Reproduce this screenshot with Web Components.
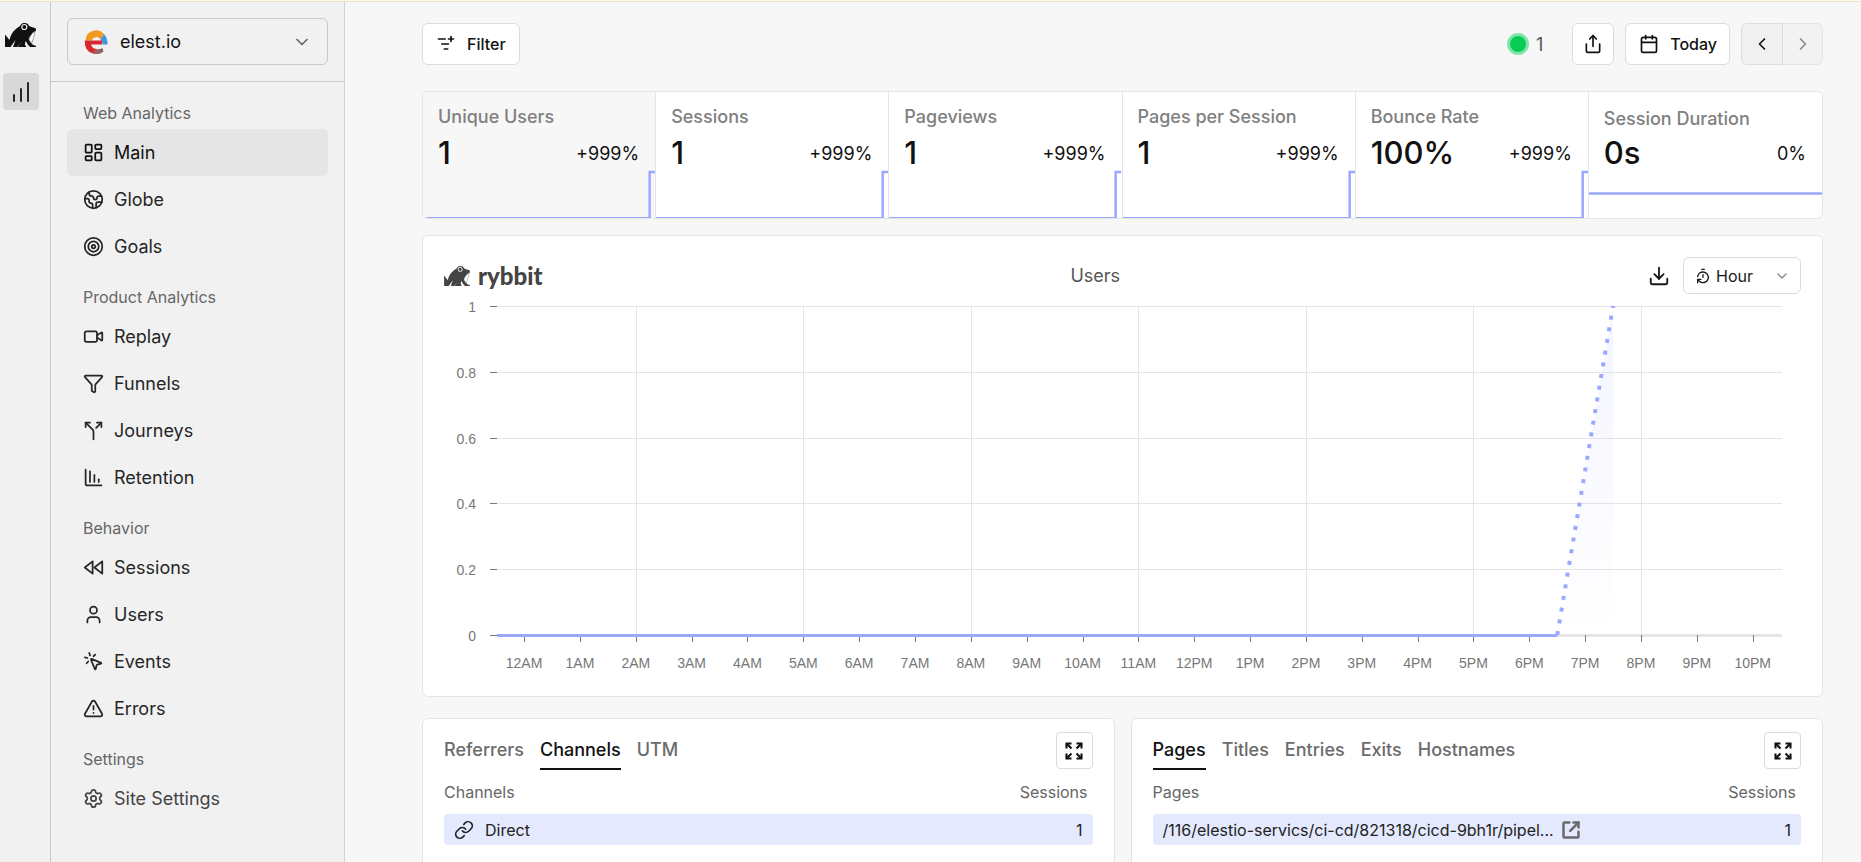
<!DOCTYPE html>
<html lang="en">
<head>
<meta charset="utf-8">
<title>Rybbit · Main</title>
<style>
html,body{margin:0;height:100%}
body{font-family:Inter,sans-serif;color:#171717;background:#f7f7f7}
</style>
</head>
<body>
<app-shell>
  <icon-rail slot="rail"></icon-rail>
  <side-nav slot="nav">
    <nav-group label="Web Analytics">
      <nav-item icon="dashboard" active>Main</nav-item>
      <nav-item icon="earth">Globe</nav-item>
      <nav-item icon="target">Goals</nav-item>
    </nav-group>
    <nav-group label="Product Analytics">
      <nav-item icon="video">Replay</nav-item>
      <nav-item icon="funnel">Funnels</nav-item>
      <nav-item icon="split">Journeys</nav-item>
      <nav-item icon="decreasing">Retention</nav-item>
    </nav-group>
    <nav-group label="Behavior">
      <nav-item icon="rewind">Sessions</nav-item>
      <nav-item icon="user">Users</nav-item>
      <nav-item icon="click">Events</nav-item>
      <nav-item icon="alert">Errors</nav-item>
    </nav-group>
    <nav-group label="Settings">
      <nav-item icon="settings" muted>Site Settings</nav-item>
    </nav-group>
  </side-nav>
  <top-bar></top-bar>
  <stat-strip>
    <stat-card label="Unique Users" value="1" change="+999%" selected></stat-card>
    <stat-card label="Sessions" value="1" change="+999%"></stat-card>
    <stat-card label="Pageviews" value="1" change="+999%"></stat-card>
    <stat-card label="Pages per Session" value="1" change="+999%"></stat-card>
    <stat-card label="Bounce Rate" value="100%" change="+999%"></stat-card>
    <stat-card label="Session Duration" value="0s" change="0%" flat></stat-card>
  </stat-strip>
  <chart-panel><line-chart></line-chart></chart-panel>
  <panel-grid>
    <data-panel tabs="Referrers,Channels,UTM" current="Channels" column="Channels" icon="link" value="1" row="Direct"></data-panel>
    <data-panel tabs="Pages,Titles,Entries,Exits,Hostnames" current="Pages" column="Pages" href="#page" value="1" row="/116/elestio-servics/ci-cd/821318/cicd-9bh1r/pipel..."></data-panel>
  </panel-grid>
</app-shell>

<script>
const ICONS = {
  dashboard:'<rect x="3" y="3" width="7" height="9" rx="1"/><rect x="14" y="3" width="7" height="5" rx="1"/><rect x="14" y="12" width="7" height="9" rx="1"/><rect x="3" y="16" width="7" height="5" rx="1"/>',
  earth:'<path d="M21.54 15H17a2 2 0 0 0-2 2v4.54"/><path d="M7 3.34V5a3 3 0 0 0 3 3a2 2 0 0 1 2 2c0 1.1.9 2 2 2a2 2 0 0 0 2-2c0-1.1.9-2 2-2h3.17"/><path d="M11 21.95V18a2 2 0 0 0-2-2a2 2 0 0 1-2-2v-1a2 2 0 0 0-2-2H2.05"/><circle cx="12" cy="12" r="10"/>',
  target:'<circle cx="12" cy="12" r="10"/><circle cx="12" cy="12" r="6"/><circle cx="12" cy="12" r="2"/>',
  video:'<path d="m16 13 5.223 3.482a.5.5 0 0 0 .777-.416V7.87a.5.5 0 0 0-.752-.432L16 10.5"/><rect x="2" y="6" width="14" height="12" rx="2"/>',
  funnel:'<path d="M10 20a1 1 0 0 0 .553.895l2 1A1 1 0 0 0 14 21v-7a2 2 0 0 1 .517-1.341L21.74 4.67A1 1 0 0 0 21 3H3a1 1 0 0 0-.742 1.67l7.225 7.989A2 2 0 0 1 10 14z"/>',
  split:'<path d="M16 3h5v5"/><path d="M8 3H3v5"/><path d="M12 22v-8.3a4 4 0 0 0-1.172-2.872L3 3"/><path d="m15 9 6-6"/>',
  decreasing:'<path d="M13 17V9"/><path d="M18 17v-3"/><path d="M3 3v16a2 2 0 0 0 2 2h16"/><path d="M8 17V5"/>',
  rewind:'<path d="M11 19 2 12l9-7z"/><path d="m22 19-9-7 9-7z"/>',
  user:'<path d="M19 21v-2a4 4 0 0 0-4-4H9a4 4 0 0 0-4 4v2"/><circle cx="12" cy="7" r="4"/>',
  click:'<path d="M14 4.1 12 6"/><path d="m5.1 8-2.9-.8"/><path d="m6 12-1.9 2"/><path d="M7.2 2.2 8 5.1"/><path d="M9.037 9.69a.498.498 0 0 1 .653-.653l11 4.5a.5.5 0 0 1-.074.949l-4.349 1.041a1 1 0 0 0-.74.739l-1.04 4.35a.5.5 0 0 1-.95.074z"/>',
  alert:'<path d="m21.73 18-8-14a2 2 0 0 0-3.48 0l-8 14A2 2 0 0 0 4 21h16a2 2 0 0 0 1.73-3"/><path d="M12 9v4"/><path d="M12 17h.01"/>',
  settings:'<path d="M9.671 4.136a2.34 2.34 0 0 1 4.659 0 2.34 2.34 0 0 0 3.319 1.915 2.34 2.34 0 0 1 2.33 4.033 2.34 2.34 0 0 0 0 3.831 2.34 2.34 0 0 1-2.33 4.033 2.34 2.34 0 0 0-3.319 1.915 2.34 2.34 0 0 1-4.659 0 2.34 2.34 0 0 0-3.32-1.915 2.34 2.34 0 0 1-2.33-4.033 2.34 2.34 0 0 0 0-3.831A2.34 2.34 0 0 1 6.35 6.051a2.34 2.34 0 0 0 3.319-1.915"/><circle cx="12" cy="12" r="3"/>',
  filter:'<path d="M10 18h4"/><path d="M11 6H3"/><path d="M15 6h6"/><path d="M18 9V3"/><path d="M7 12h8"/>',
  share:'<path d="M12 2v13"/><path d="m16 6-4-4-4 4"/><path d="M4 12v8a2 2 0 0 0 2 2h12a2 2 0 0 0 2-2v-8"/>',
  calendar:'<path d="M8 2v4"/><path d="M16 2v4"/><rect width="18" height="18" x="3" y="4" rx="2"/><path d="M3 10h18"/>',
  download:'<path d="M12 15V3"/><path d="M21 15v4a2 2 0 0 1-2 2H5a2 2 0 0 1-2-2v-4"/><path d="m7 10 5 5 5-5"/>',
  timer:'<path d="M10 2h4"/><path d="M12 14v-4"/><path d="M4 13a8 8 0 0 1 8-7 8 8 0 1 1-5.3 14L4 17.6"/><path d="M9 17H4v5"/>',
  expand:'<g stroke-linecap="butt" stroke-linejoin="miter"><path d="M9 9 3 3"/><path d="m15 9 6-6"/><path d="m9 15-6 6"/><path d="m15 15 6 6"/><path d="M3 9V3h6"/><path d="M15 3h6v6"/><path d="M3 15v6h6"/><path d="M15 21h6v-6"/></g>',
  link:'<path d="M10 13a5 5 0 0 0 7.54.54l3-3a5 5 0 0 0-7.07-7.07l-1.72 1.71"/><path d="M14 11a5 5 0 0 0-7.54-.54l-3 3a5 5 0 0 0 7.07 7.07l1.71-1.71"/>',
  external:'<path d="M10 3H4a1 1 0 0 0-1 1v16a1 1 0 0 0 1 1h16a1 1 0 0 0 1-1v-6"/><path d="M21 3 11 13"/><path d="M15 3h6v6"/>',
  bars:'<path d="M5 21v-6"/><path d="M12 21V9"/><path d="M19 21V3"/>',
  down:'<path d="m6 9 6 6 6-6"/>', left:'<path d="m15 18-6-6 6-6"/>', right:'<path d="m9 18 6-6-6-6"/>'
};
const FROG = '<svg viewBox="0 0 31 24" aria-hidden="true"><path fill="currentColor" d="M0 24V11.500L4.500 17C6 10 10 6 15 3C16 0.500 18 0 20 0C22 0 23.500 1 24 3L31 5.500L30.800 8C28 9 25 12 23.600 16C24.500 19 27 22 31 23V24H25C22.500 21.500 21.500 19.500 21 18C19.500 20 19.500 22 21.500 24H12.500L16.500 19L12 24H8L10.500 17L5.500 24Z"/><path d="M29.800 8.200C29.500 13 28 17 26.500 20.500L24 16.500C25.500 12.500 27.500 9.500 29.800 8.200Z" fill="#fff" stroke="currentColor" stroke-width=".4"/><circle cx="19.300" cy="4" r="2.500" fill="none" stroke="#f1f1f1" stroke-width="1.200"/></svg>';

class Base extends HTMLElement {
  constructor() { super(); this.attachShadow({ mode: 'open' }); }
  connectedCallback() {
    this.shadowRoot.innerHTML = '<style>:host,*{box-sizing:border-box}button,select{font:inherit;color:inherit}' + this.css() + '</style>' + this.html();
  }
  attr(name) { return this.getAttribute(name) || ''; }
}
const define = (name, css, html) => customElements.define(name, class extends Base {
  css() { return css; }
  html() { return html(this); }
});

define('ui-icon',
  ':host{display:inline-flex;flex:none;width:20px;height:20px}svg{width:100%;height:100%;fill:none;stroke:currentColor;stroke-width:var(--stroke,2);stroke-linecap:round;stroke-linejoin:round}',
  e => `<svg viewBox="0 0 24 24" aria-hidden="true">${ICONS[e.attr('name')] || ''}</svg>`);

define('frog-mark', ':host{display:block;flex:none}svg{display:block;width:100%;height:100%}', () => FROG);

define('app-shell', `
  :host{display:flex;flex-direction:column;height:100vh}
  .strip{height:2px;flex:none;background:#fdfae8;border-bottom:1px solid #e6e1cf}
  .body{display:flex;flex:1;min-height:0}
  main{flex:1;min-width:0;padding:21px 38px 0 77px;display:flex;flex-direction:column;overflow-y:auto;scrollbar-width:none}
`, () => `<div class="strip"></div><div class="body"><slot name="rail"></slot><slot name="nav"></slot><main><slot></slot></main></div>`);

define('icon-rail', `
  :host{display:flex;flex-direction:column;align-items:flex-start;flex:none;width:51px;background:#f1f1f1;border-right:1px solid #c8c8c8}
  a{color:#111;display:flex}
  .home{padding:21px 0 0 5px}
  frog-mark{width:31px;height:24px}
  .sites{margin:26px 0 0 3px;width:36px;height:37px;border-radius:4px;background:#d9d9d9;color:#262626;align-items:center;justify-content:center}
  ui-icon{width:24px;height:24px}
`, () => `<a class="home" href="#home" aria-label="Rybbit"><frog-mark></frog-mark></a><a class="sites" href="#sites" aria-label="Sites"><ui-icon name="bars"></ui-icon></a>`);

define('side-nav', `
  :host{display:block;flex:none;width:294px;background:#f1f1f1;border-right:1px solid #d4d4d4}
  .site{padding:16px;border-bottom:1px solid #c8c8c8}
  .box{display:grid;align-items:center}
  .box>*{grid-area:1/1}
  select{appearance:none;width:100%;height:47px;padding:0 44px 0 52px;background:none;border:1px solid #c8c8c8;border-radius:6px;font-size:18px;color:#111}
  svg{width:24px;height:24px;margin-left:17px;pointer-events:none}
  ui-icon{justify-self:end;margin-right:16px;color:#666;pointer-events:none}
  nav{display:flex;flex-direction:column;gap:15px;padding:19px 16px 0}
`, () => `<div class="site"><div class="box"><select aria-label="Site"><option>elest.io</option></select>
  <svg viewBox="0 0 24 24" fill="none" aria-hidden="true"><path d="M1.500 10.500A10.500 10.500 0 0 1 20 4L16.500 9.500A5 5 0 0 0 7.500 10.500Z" fill="#f09a22"/><path d="M20 4Q24 9 23.500 14.500H18.500Q18.500 11.500 16.500 9.500Z" fill="#3f97dc"/><path d="M0.800 10.500H18V14.500H7Q8.500 19 13 19L9 23.500Q0 21 0.800 10.500Z" fill="#d8282f"/><path d="M13 19Q16 19.500 18.500 18L19.500 21.500Q14.500 25.500 8.500 23.500Z" fill="#95646b"/></svg>
  <ui-icon name="down"></ui-icon></div></div><nav aria-label="Analytics"><slot></slot></nav>`);

define('nav-group', `
  :host{display:block}
  h2{margin:0 0 4px;padding-left:16px;font-size:16px;line-height:24px;font-weight:400;color:#666}
`, e => `<h2>${e.attr('label')}</h2><slot></slot>`);

define('nav-item', `
  :host{display:block;color:#262626}
  :host([muted]){color:#444}
  a{display:flex;align-items:center;gap:10px;height:47px;padding:0 16px;border-radius:6px;color:inherit;text-decoration:none;font-size:18px}
  :host([active]) a{background:#e5e5e5;color:#111}
  ui-icon{width:21px;height:21px}
`, e => `<a href="#${e.attr('icon')}"><ui-icon name="${e.attr('icon')}"></ui-icon><span><slot></slot></span></a>`);

define('top-bar', `
  :host{display:flex;align-items:center;gap:11px;flex:none;font-size:16px}
  button{height:42px;display:flex;align-items:center;justify-content:center;background:#fff;border:1px solid #dcdcdc;border-radius:6px;padding:0;font-weight:500;color:#111}
  .filter{padding:0 13px;gap:11px;margin-right:auto}
  .square{width:42px}
  .date{padding:0 12px 0 13px;gap:11px}
  .live{display:flex;align-items:center;gap:7px;font-size:18px;color:#555;margin-right:18px}
  .dot{width:22px;height:22px;border-radius:50%;background:#0acc55;border:3px solid #80e5ac}
  .pair{display:flex}
  .prev{width:42px;background:#f0f0f0;border-radius:6px 0 0 6px}
  .next{width:40px;background:#f2f2f2;border-left:0;border-radius:0 6px 6px 0;color:#888;border-color:#e5e5e5}
`, () => `<button class="filter"><ui-icon name="filter"></ui-icon>Filter</button>
  <span class="live"><span class="dot"></span>1</span>
  <button class="square" aria-label="Share"><ui-icon name="share"></ui-icon></button>
  <button class="date"><ui-icon name="calendar"></ui-icon>Today</button>
  <span class="pair"><button class="prev" aria-label="Previous"><ui-icon name="left"></ui-icon></button><button class="next" aria-label="Next" disabled><ui-icon name="right"></ui-icon></button></span>`);

define('stat-strip', `
  :host{display:grid;grid-template-columns:repeat(6,1fr);flex:none;margin-top:26px;background:#fff;border:1px solid #e5e5e5;border-radius:6px;overflow:hidden}
`, () => `<slot></slot>`);

define('stat-card', `
  :host{display:flex;flex-direction:column;height:126px;border-right:1px solid #e5e5e5}
  :host([selected]){background:#f7f7f7}
  :host(:last-child){border-right:0}
  .label{padding:13px 15px 0;font-size:18px;line-height:24px;font-weight:500;color:#808080}
  :host([flat]) .label{padding-top:15px;margin-bottom:-2px}
  .row{display:flex;align-items:center;justify-content:space-between;padding:0 16px 0 15px;height:48px;font-size:18px;color:#111}
  .value{font-size:31px;line-height:48px;font-weight:500}
  svg{display:block;flex:none;margin-top:-7px;width:100%;height:48px;fill:none;stroke:#9aa8ff}
`, e => `<div class="label">${e.attr('label')}</div><div class="row"><span class="value">${e.attr('value')}</span><span>${e.attr('change')}</span></div>
  <svg viewBox="0 0 232 48" preserveAspectRatio="none" aria-hidden="true">${e.hasAttribute('flat')
    ? '<path d="M0 23.500H232" stroke-width="2.500"/>'
    : '<path d="M0 47.500H226" stroke-width="1"/><path d="M226.500 48V2H232" stroke-width="2.500"/>'}</svg>`);

define('chart-panel', `
  :host{display:flex;flex-direction:column;flex:none;margin-top:16px;padding:21px 21px 0;background:#fff;border:1px solid #e5e5e5;border-radius:6px;height:462px}
  header{display:flex;align-items:center;justify-content:space-between;height:37px}
  .brand{display:flex;align-items:center;gap:8px;color:#444;text-decoration:none;font:900 24px/28px Lato,sans-serif}
  frog-mark{width:26px;height:20px}
  .title{font-size:18px;line-height:24px;color:#555}
  .tools{display:flex;align-items:center;gap:13px}
  .get{border:0;background:none;padding:0;display:flex}
  .get ui-icon{width:22px;height:22px}
  .pick{display:grid;align-items:center;width:118px}
  .pick>*{grid-area:1/1}
  select{appearance:none;width:100%;height:37px;padding:0 32px 0 32px;font-size:16px;border:1px solid #dcdcdc;border-radius:6px;background:#fff}
  .pick ui-icon{pointer-events:none;width:16px;height:16px}
  .clock{margin-left:12px}
  .arrow{justify-self:end;margin-right:11px;color:#888}
`, () => `<header><a class="brand" href="#rybbit"><frog-mark></frog-mark>rybbit</a><span class="title">Users</span>
  <span class="tools"><button class="get" aria-label="Download"><ui-icon name="download"></ui-icon></button>
  <span class="pick"><select aria-label="Bucket size"><option>Hour</option></select><ui-icon class="clock" name="timer"></ui-icon><ui-icon class="arrow" name="down"></ui-icon></span></span></header><slot></slot>`);

customElements.define('line-chart', class extends Base {
  css() { return ':host{display:block;height:380px}svg{display:block;width:100%;height:380px;font:14px "Liberation Sans",Arial,sans-serif}'; }
  html() { return '<svg role="img" aria-label="Users per hour"></svg>'; }
  connectedCallback() {
    super.connectedCallback();
    this.draw();
    new ResizeObserver(() => this.draw()).observe(this);
  }
  draw() {
    const left = 53, right = this.clientWidth - 19, top = 12, bottom = 341;
    if (right <= left) return;
    const step = (right - left) / 23.01, x = i => left + step * (i + 0.485);
    let s = '<defs><linearGradient id="fill" x1="0" y1="0" x2="0" y2="1"><stop offset="0" stop-color="#9aa8ff" stop-opacity=".12"/><stop offset="1" stop-color="#9aa8ff" stop-opacity="0"/></linearGradient></defs>';
    for (let i = 0; i <= 5; i++) {
      const y = Math.round(bottom - (bottom - top) * i / 5) + 0.5;
      const label = i === 0 ? '0' : i === 5 ? '1' : (i / 5).toFixed(1);
      s += `<path d="M${left} ${y}H${right}" stroke="#e5e5e5" stroke-width="${i ? 1 : 3}"/><path d="M${left - 7} ${y}h7" stroke="#777"/><text x="${left - 21}" y="${y + 5}" text-anchor="end" fill="#777">${label}</text>`;
    }
    for (let i = 2; i < 23; i += 3) s += `<path d="M${Math.round(x(i)) + 0.5} ${top}V${bottom}" stroke="#e5e5e5"/>`;
    for (let i = 0; i < 23; i++) {
      const h = i % 12 || 12;
      s += `<path d="M${Math.round(x(i)) + 0.5} ${bottom}v7" stroke="#777"/><text x="${x(i)}" y="${bottom + 33}" text-anchor="middle" fill="#777">${h}${i < 12 ? 'AM' : 'PM'}</text>`;
    }
    const a = x(18.5), b = x(19.5);
    s += `<path d="M${a} ${bottom}L${b} ${top}V${bottom}Z" fill="url(#fill)"/>
      <path d="M${left} ${bottom + 0.5}H${a}" stroke="#9aa8ff" stroke-width="3"/>
      <path d="M${a} ${bottom}L${b} ${top}" stroke="#9aa8ff" stroke-width="4" stroke-dasharray="4 7.850"/>`;
    this.shadowRoot.querySelector('svg').innerHTML = s;
  }
});

define('panel-grid', ':host{display:grid;grid-template-columns:1fr 1fr;gap:16px;flex:none;margin-top:21px}', () => '<slot></slot>');

define('data-panel', `
  :host{display:block;height:460px;min-width:0;padding:13px 21px;background:#fff;border:1px solid #e5e5e5;border-radius:6px}
  header{display:flex;justify-content:space-between}
  .tabs{display:flex;gap:16px}
  .tabs button{border:0;background:none;padding:0;height:38px;font-size:18px;font-weight:500;line-height:36px;color:#6b6b6b;border-bottom:2px solid transparent}
  .tabs button[aria-selected=true]{color:#111;border-color:#111}
  .full{width:37px;height:37px;display:flex;align-items:center;justify-content:center;padding:0;background:#fff;border:1px solid #dcdcdc;border-radius:4px;color:#111}
  .full ui-icon{--stroke:2.5}
  table{width:100%;margin-top:8px;border-collapse:separate;border-spacing:0;font-size:16px}
  th{font-weight:400;color:#666;text-align:left;padding:0 0 8px;line-height:28px}
  th:last-child{text-align:right;padding-right:5px}
  td{background:#e4e9fe;height:31px;padding:0 10px;color:#222}
  td:first-child{border-radius:4px 0 0 4px}
  td:last-child{text-align:right;border-radius:0 4px 4px 0}
  .cell{display:flex;align-items:center;gap:11px}
  .cell a{display:flex;color:#6b6b6b;margin-left:-4px;--stroke:3}
`, e => `<header><div class="tabs" role="tablist">${e.attr('tabs').split(',').map(t => `<button role="tab" aria-selected="${t === e.attr('current')}">${t}</button>`).join('')}</div>
  <button class="full" aria-label="Expand"><ui-icon name="expand"></ui-icon></button></header>
  <table><thead><tr><th>${e.attr('column')}</th><th>Sessions</th></tr></thead>
  <tbody><tr><td><div class="cell">${e.attr('icon') ? `<ui-icon name="${e.attr('icon')}"></ui-icon>` : ''}<span>${e.attr('row')}</span>${e.attr('href') ? `<a href="${e.attr('href')}" aria-label="Open page"><ui-icon name="external"></ui-icon></a>` : ''}</div></td><td>${e.attr('value')}</td></tr></tbody></table>`);
</script>
</body>
</html>
